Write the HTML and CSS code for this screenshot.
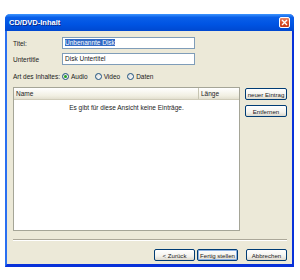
FILE: index.html
```html
<!DOCTYPE html>
<html lang="de">
<head>
    <meta charset="UTF-8">
    <meta name="viewport" content="width=device-width, initial-scale=1.0">
    <title>CD/DVD-Inhalt</title>
    <link rel="stylesheet" href="styles.css">
</head>
<body>
    <div class="window">
        <div class="titlebar">
            <span class="title">CD/DVD-Inhalt</span>
            <span class="close">
                <svg width="7" height="7" viewBox="0 0 7 7"><path d="M1 1 L6 6 M6 1 L1 6" stroke="#fff" stroke-width="1.4"/></svg>
            </span>
        </div>
        <div class="content">
            <div class="field">
                <label class="lbl">Titel:</label>
                <div class="input"><span class="selected">Unbenannte Disk</span></div>
            </div>
            <div class="field">
                <label class="lbl">Untertitle</label>
                <div class="input">Disk Untertitel</div>
            </div>
            <div class="field radios">
                <span class="lbl">Art des Inhaltes:</span>
                <span class="radio checked"></span><span class="opt">Audio</span>
                <span class="radio"></span><span class="opt">Video</span>
                <span class="radio"></span><span class="opt">Daten</span>
            </div>
            <div class="main">
                <div class="list">
                    <div class="list-head">
                        <span class="col-name">Name</span>
                        <span class="col-len">Länge</span>
                    </div>
                    <div class="empty">Es gibt für diese Ansicht keine Einträge.</div>
                </div>
                <div class="side">
                    <button class="btn">neuer Eintrag</button>
                    <button class="btn">Entfernen</button>
                </div>
            </div>
            <div class="sep"></div>
            <div class="footer">
                <button class="btn">&lt; Zurück</button>
                <button class="btn default">Fertig stellen</button>
                <button class="btn cancel">Abbrechen</button>
            </div>
        </div>
    </div>
</body>
</html>
```
FILE: styles.css
```css
body {
    margin: 0;
    background: #ffffff;
    font-family: 'Liberation Sans', Arial, sans-serif;
    font-size: 6.5px;
    color: #1a1a1a;
}

.window {
    margin: 14px 6px 0 5px;
    height: 253px;
    box-sizing: border-box;
    display: flex;
    flex-direction: column;
    border: 2px solid #0831d9;
    border-left-color: #2a6ff0;
    border-top: none;
    border-bottom-width: 3px;
    border-radius: 5px 5px 0 0;
    background: #ece9d8;
}

.titlebar {
    height: 17px;
    margin: 0 -2px;
    border-radius: 5px 5px 0 0;
    background: linear-gradient(to bottom, #3d95ff 0%, #0a5fe8 20%, #0054e3 60%, #0048d0 100%);
    display: flex;
    align-items: center;
    padding: 0 4px 0 4px;
}

.title {
    flex: 1;
    color: #ffffff;
    font-weight: bold;
    font-size: 7.5px;
    text-shadow: 1px 1px 0 #0a2a8a;
}

.close {
    width: 11px;
    height: 11px;
    box-sizing: border-box;
    border: 1px solid #ffffff;
    border-radius: 2px;
    background: linear-gradient(to bottom, #e88a6c, #d9502a 50%, #c73b18);
    display: flex;
    align-items: center;
    justify-content: center;
}

.content {
    flex: 1;
    display: flex;
    flex-direction: column;
    padding: 6px 5px 0 6px;
}

.field {
    display: flex;
    align-items: center;
    height: 12px;
    margin-bottom: 4px;
}

.lbl {
    width: 49px;
    flex: none;
}

.input {
    width: 133px;
    height: 12px;
    box-sizing: border-box;
    border: 1px solid #7f9db9;
    background: #ffffff;
    padding: 0 2px;
    line-height: 10px;
}

.selected {
    background: #316ac5;
    color: #ffffff;
}

.radios {
    margin-top: 1px;
    margin-bottom: 5px;
}

.radio {
    width: 7px;
    height: 7px;
    box-sizing: border-box;
    border: 1px solid #1c5180;
    border-radius: 50%;
    background: linear-gradient(135deg, #dcdcd7, #ffffff);
    margin-right: 2px;
    position: relative;
}

.radio.checked::after {
    content: '';
    position: absolute;
    left: 1px;
    top: 1px;
    width: 3px;
    height: 3px;
    border-radius: 50%;
    background: #21a121;
}

.opt {
    margin-right: 7px;
}

.main {
    display: flex;
    gap: 5px;
    height: 144px;
}

.list {
    width: 227px;
    box-sizing: border-box;
    border: 1px solid #a5a597;
    background: #ffffff;
}

.list-head {
    display: flex;
    height: 11px;
    line-height: 11px;
    background: linear-gradient(to bottom, #ffffff, #f1efe2 70%, #e2dfcf);
    border-bottom: 1px solid #d0ccb9;
}

.col-name {
    flex: 1;
    padding-left: 2px;
    border-right: 1px solid #c7c5b2;
}

.col-len {
    width: 38px;
    padding-left: 2px;
}

.empty {
    text-align: center;
    margin-top: 4px;
}

.side {
    display: flex;
    flex-direction: column;
    gap: 5px;
    padding-top: 1px;
}

.btn {
    width: 42px;
    height: 12px;
    padding: 0;
    font-family: inherit;
    font-size: 6.1px;
    color: #1a1a1a;
    border: 1px solid #003c74;
    border-radius: 2px;
    background: linear-gradient(to bottom, #ffffff, #f4f3ee 60%, #dcd9cd);
    white-space: nowrap;
}

.btn.default {
    box-shadow: inset 0 0 0 1px #8db2e3;
}

.sep {
    margin-top: 8px;
    border-top: 1px solid #aca899;
    border-bottom: 1px solid #ffffff;
}

.footer {
    display: flex;
    justify-content: flex-end;
    gap: 2px;
    margin-top: 8px;
}

.footer .btn {
    width: 41px;
}

.footer .cancel {
    margin-left: 6px;
}
```
